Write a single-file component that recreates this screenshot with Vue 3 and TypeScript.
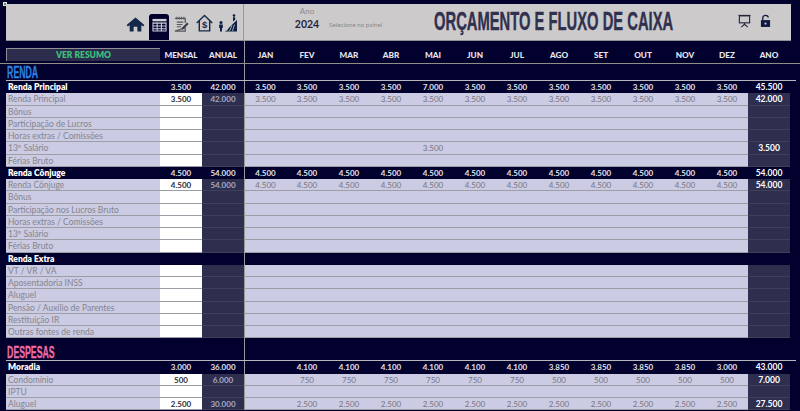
<template>
  <div class="sheet">
    <span class="handle"></span>
    <header class="panel">
      <div class="nav">
        <svg class="ico home" viewBox="0 0 20 16" width="19" height="15"><path d="M10 .5 L.5 8.500 L2 10 L3.800 8.600 V15.500 H8 V10.500 H12 V15.500 H16.200 V8.600 L18 10 L19.500 8.500 Z" fill="#14284a" /></svg>
        <div class="tab">
          <svg viewBox="0 0 16 14" width="15" height="14"><rect x="0.5" y="0.5" width="15" height="2.600" fill="#cfcfd6" /><path d="M.5 5h15M.5 8h15M.5 11h15M.5 13.500h15M1 4v10M5.500 4v10M10 4v10M15 4v10" stroke="#cfcfd6" stroke-width="1.100" fill="none" /></svg>
        </div>
        <svg class="ico" viewBox="0 0 16 17" width="15" height="16"><path d="M1 2.500 H12 V7.500 M12 12.500 V16 H1 Z" fill="none" stroke="#55555f" stroke-width="1.300" /><path d="M3 .8v3M5.500 .8v3M8 .8v3M10.500 .8v3M3 6.500h7M3 9h6M3 11.500h4.500" stroke="#55555f" stroke-width="1.100" /><path d="M7.800 14.500 L8.500 12.500 L14 7 L15.600 8.600 L10 14 Z" fill="#3a3a46" /></svg>
        <svg class="ico house" viewBox="0 0 18 19" width="17" height="18"><path d="M.8 9.500 L9 1.500 L17.200 9.500 M3.500 7.500 V17.800 H14.500 V7.500" fill="none" stroke="#14284a" stroke-width="1.500" /><text x="9" y="15" text-anchor="middle" class="dollar">$</text></svg>
        <svg class="ico" viewBox="0 0 20 18" width="20" height="18"><path d="M7 17.500 L19 6 V17.500 Z" fill="#0d1f45" /><path d="M8.500 17L11 12.500M11.500 17L14 11.500M14.500 17L16.500 10.500" stroke="#cccaca" stroke-width=".8" /><circle cx="3" cy="8.500" r="1.500" fill="#0d1f45" /><path d="M1.200 10.500h3.600v3.500h-.8v3.500h-2v-3.500h-.8z" fill="#0d1f45" /><circle cx="16" cy="1.500" r="1.300" fill="#0d1f45" /><path d="M15 3.300h2.200v2.500l-2.200 1.800z" fill="#0d1f45" /></svg>
      </div>
      <div class="year">
        <span class="year-label">Ano</span>
        <span class="year-value">2024</span>
      </div>
      <span class="hint">Selecione no painel</span>
      <h1 class="title"><span>ORÇAMENTO E FLUXO DE CAIXA</span></h1>
      <div class="tools">
        <svg viewBox="0 0 14 14" width="13" height="14"><path d="M.5 1h13" stroke="#26263f" stroke-width="1.200" /><rect x="1.500" y="1.500" width="11" height="7.500" fill="none" stroke="#26263f" stroke-width="1.200" /><path d="M7 9v2.500M7 10.500L3.500 13.500M7 10.500L10.500 13.500" stroke="#26263f" stroke-width="1.100" fill="none" /></svg>
        <svg viewBox="0 0 12 15" width="11" height="14"><path d="M3 6.500V3.800C3 .5 9 .5 9 3.800" fill="none" stroke="#0d1b42" stroke-width="1.400" /><rect x="1" y="6.500" width="10" height="7.500" fill="#0d1b42" /><rect x="5" y="9.300" width="2" height="2" fill="#cccaca" /></svg>
      </div>
    </header>

    <div class="grid cols-head">
      <button class="resume">VER RESUMO</button>
      <span class="col-name">MENSAL</span>
      <span class="col-name">ANUAL</span>
      <span v-for="(m, i) in months" :key="m" class="col-name" :class="{ split: i === 0 }">{{ m }}</span>
      <span class="col-name">ANO</span>
    </div>

    <template v-for="group in groups" :key="group.title">
      <div class="grid section" :class="group.tone">
        <h2 class="section-title">{{ group.title }}</h2>
        <span class="split month-start"></span>
      </div>
      <div
        v-for="(row, r) in group.rows"
        :key="group.title + r"
        class="grid row"
        :class="row.head ? 'head' : 'item'"
      >
        <span class="label">{{ row.label }}</span>
        <span class="num mensal">{{ row.mensal }}</span>
        <span class="num anual">{{ row.anual }}</span>
        <span
          v-for="(v, i) in monthValues(row)"
          :key="i"
          class="num month"
          :class="{ split: i === 0 }"
        >{{ v }}</span>
        <span class="num total">{{ row.total }}</span>
      </div>
    </template>
  </div>
</template>

<script setup lang="ts">
interface Row {
  label: string;
  head?: boolean;
  mensal?: string;
  anual?: string;
  values?: string[];
  total?: string;
}

const months = ['JAN', 'FEV', 'MAR', 'ABR', 'MAI', 'JUN', 'JUL', 'AGO', 'SET', 'OUT', 'NOV', 'DEZ'];

const fill = (v: string) => Array(12).fill(v) as string[];
const blank = (label: string): Row => ({ label });

const groups: { title: string; tone: string; rows: Row[] }[] = [
  {
    title: 'RENDA',
    tone: 'blue',
    rows: [
      {
        label: 'Renda Principal',
        head: true,
        mensal: '3.500',
        anual: '42.000',
        values: fill('3.500').map((v, i) => (i === 4 ? '7.000' : v)),
        total: '45.500',
      },
      { label: 'Renda Principal', mensal: '3.500', anual: '42.000', values: fill('3.500'), total: '42.000' },
      blank('Bônus'),
      blank('Participação de Lucros'),
      blank('Horas extras / Comissões'),
      { label: '13º Salário', values: fill('').map((v, i) => (i === 4 ? '3.500' : v)), total: '3.500' },
      blank('Férias Bruto'),
      { label: 'Renda Cônjuge', head: true, mensal: '4.500', anual: '54.000', values: fill('4.500'), total: '54.000' },
      { label: 'Renda Cônjuge', mensal: '4.500', anual: '54.000', values: fill('4.500'), total: '54.000' },
      blank('Bônus'),
      blank('Participação nos Lucros Bruto'),
      blank('Horas extras / Comissões'),
      blank('13º Salário'),
      blank('Férias Bruto'),
      { label: 'Renda Extra', head: true },
      blank('VT / VR / VA'),
      blank('Aposentadoria INSS'),
      blank('Aluguel'),
      blank('Pensão / Auxílio de Parentes'),
      blank('Restituição IR'),
      blank('Outras fontes de renda'),
    ],
  },
  {
    title: 'DESPESAS',
    tone: 'pink',
    rows: [
      {
        label: 'Moradia',
        head: true,
        mensal: '3.000',
        anual: '36.000',
        values: ['', '4.100', '4.100', '4.100', '4.100', '4.100', '4.100', '3.850', '3.850', '3.850', '3.850', '3.000'],
        total: '43.000',
      },
      {
        label: 'Condomínio',
        mensal: '500',
        anual: '6.000',
        values: ['', '750', '750', '750', '750', '750', '750', '500', '500', '500', '500', '500'],
        total: '7.000',
      },
      blank('IPTU'),
      {
        label: 'Aluguel',
        mensal: '2.500',
        anual: '30.000',
        values: ['', ...Array(11).fill('2.500')],
        total: '27.500',
      },
    ],
  },
];

const monthValues = (row: Row) => row.values ?? fill('');
</script>

<style>
html,
body {
  background: #02012e;
  overflow: hidden;
}
</style>

<style scoped>
.sheet {
  position: relative;
  width: 800px;
  height: 411px;
  overflow: hidden;
  background: #02012e;
  padding-top: 4px;
  box-sizing: border-box;
  font-family: Lato, "Open Sans", sans-serif;
}

.handle {
  position: absolute;
  left: 3px;
  top: 2px;
  width: 4px;
  height: 4px;
  background: #5d9a78;
  border: 1px solid #d8e8dc;
  box-sizing: border-box;
}

.panel {
  position: relative;
  display: flex;
  align-items: center;
  width: 785px;
  height: 37px;
  margin-left: 6px;
  background: #cccaca;
  border-bottom: 1px solid #8f8f94;
  box-sizing: border-box;
}

.nav {
  width: 238px;
  height: 100%;
  flex: none;
  display: flex;
  justify-content: flex-end;
  align-items: flex-end;
  gap: 5px;
  padding-right: 5px;
  padding-bottom: 8px;
  box-sizing: border-box;
  border-right: 1px solid #98989b;
}

.ico {
  display: block;
  flex: none;
}

.home {
  margin-right: -1px;
}

.house {
  margin-left: 2px;
}

.tab {
  width: 20px;
  height: 26px;
  margin-bottom: -8px;
  background: #02012e;
  border-radius: 3px 3px 0 0;
  display: flex;
  justify-content: center;
  padding-top: 4px;
  box-sizing: border-box;
}

.dollar {
  font: 700 10px "Liberation Sans", sans-serif;
  fill: #14284a;
}

.year {
  width: 126px;
  flex: none;
  display: flex;
  flex-direction: column;
  align-items: center;
  line-height: 12px;
  margin-top: -9px;
}

.year-label {
  font-size: 8px;
  color: #8b8b8e;
}

.year-value {
  font-size: 10.500px;
  font-weight: 700;
  color: #26263f;
  margin-top: 1px;
}

.hint {
  position: absolute;
  left: 323px;
  top: 17px;
  font-size: 6.300px;
  color: #8b8b8e;
  white-space: nowrap;
}

.title {
  position: absolute;
  left: 428px;
  top: 4px;
  margin: 0;
  font: 700 26.500px/27px "Liberation Sans", sans-serif;
  color: #30304f;
  white-space: nowrap;
}

.title span {
  display: inline-block;
  transform: scaleX(0.557);
  transform-origin: left center;
  -webkit-text-stroke: 0.4px #30304f;
}

.tools {
  position: absolute;
  right: 20px;
  top: 10px;
  display: flex;
  align-items: center;
  gap: 9px;
}

.grid {
  display: grid;
  grid-template-columns: 154px 42px 42px repeat(12, 42px) 42px;
  margin-left: 6px;
  width: 790px;
}

.cols-head {
  height: 16px;
  padding-top: 7px;
  box-sizing: content-box;
  align-items: start;
  position: relative;
}

.cols-head::after {
  content: "";
  position: absolute;
  left: -6px;
  width: 800px;
  top: 22px;
  height: 1px;
  background: #8f8f88;
}

.resume {
  height: 13px;
  margin: 0;
  padding: 0;
  border: 0;
  border-top: 1px solid #8f8f94;
  border-left: 1px solid #8f8f94;
  background: #2c2c4c;
  color: #3cbf7c;
  font: 800 8.500px/12px Lato, sans-serif;
  text-align: center;
}

.col-name {
  height: 23px;
  color: #e6e6ee;
  font-size: 8.200px;
  font-weight: 900;
  line-height: 14px;
  text-align: center;
  margin-top: -7px;
  padding-top: 7px;
  box-sizing: border-box;
}

.split {
  border-left: 1px solid #98989b;
}

.section {
  height: 16px;
  border-bottom: 1px solid #b8b8bc;
  box-sizing: content-box;
}

.section.pink {
  height: 22px;
}

.section-title {
  margin: 0;
  grid-column: 1 / 4;
  align-self: end;
  padding-left: 2px;
  font: 700 16.500px/15px "Liberation Sans", sans-serif;
  transform: scaleX(0.53);
  transform-origin: left center;
  white-space: nowrap;
  -webkit-text-stroke: 0.3px currentColor;
}

.blue .section-title {
  color: #2f7fe0;
}

.pink .section-title {
  color: #ef6ca6;
}

.month-start {
  grid-column: 4;
}

.row {
  height: 12.250px;
}

.row > span {
  display: block;
  font-size: 8px;
  line-height: 12.500px;
  box-sizing: border-box;
  white-space: nowrap;
  overflow: hidden;
}

.num {
  text-align: center;
}

.head > span {
  color: #e0e0e8;
  font-weight: 700;
  background: #02012e;
}

.head > .label {
  font-size: 8.500px;
  font-weight: 800;
  color: #ffffff;
  padding-left: 2px;
}

.item > span {
  background: #cbcbe3;
  color: #75757f;
  border-bottom: 1px solid #9d9da6;
}

.item > .label {
  font-size: 8.500px;
  color: #85858e;
  padding-left: 2px;
}

.item > .mensal {
  background: #ffffff;
  color: #2c2c3a;
  font-weight: 700;
}

.item > .anual {
  background: #2e2e4e;
  color: #a8a8c4;
  font-weight: 700;
  border-bottom-color: #3f3f5a;
}

.item > .total {
  background: #2e2e4e;
  color: #ffffff;
  font-size: 8.500px;
  font-weight: 700;
  border-bottom-color: #3f3f5a;
}

.head > .total {
  font-size: 8.500px;
  color: #ffffff;
}
</style>
